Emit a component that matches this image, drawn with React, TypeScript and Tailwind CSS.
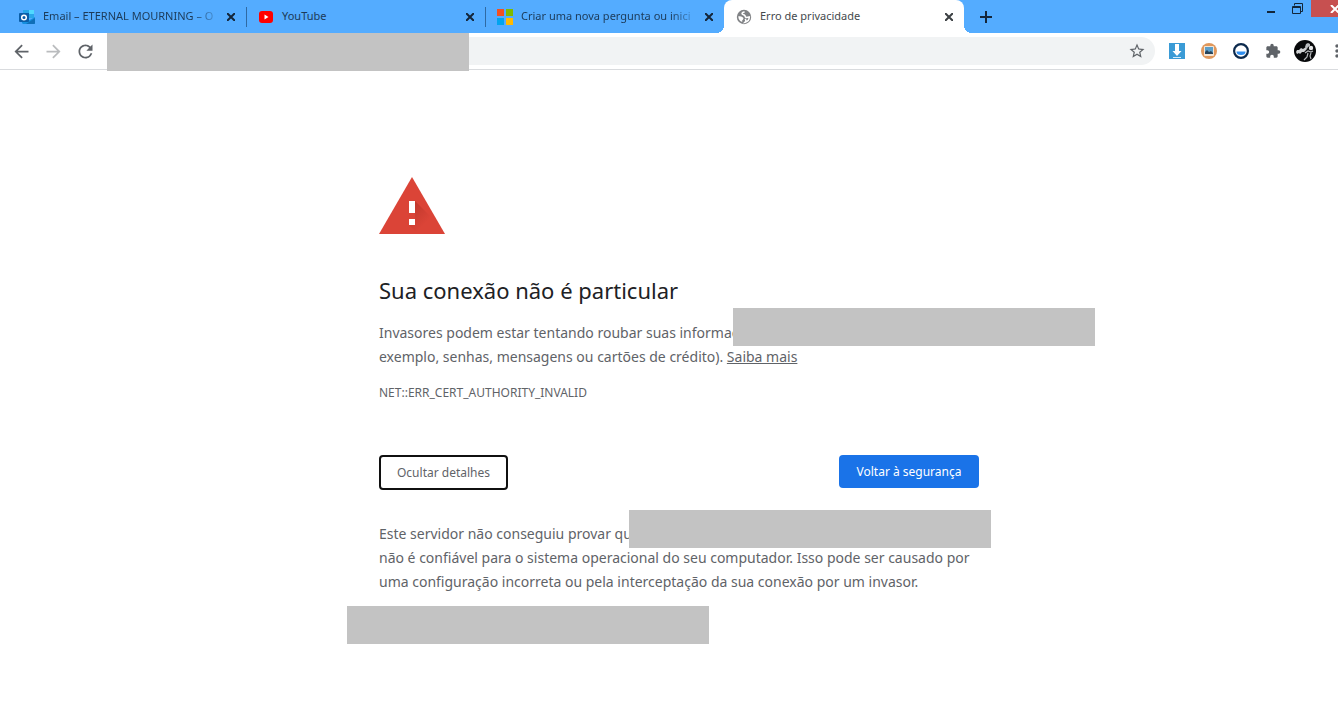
import { ReactNode } from 'react'
import {
  MdArrowBack,
  MdArrowForward,
  MdRefresh,
  MdStarOutline,
  MdExtension,
  MdMoreVert,
} from 'react-icons/md'

export default function App() {
  return (
    <div className="min-h-screen overflow-hidden bg-white font-['Noto_Sans','Open_Sans',sans-serif]">
      {/* the window runs a little past the right edge of the screen */}
      <div className="-mr-5">
        <TabStrip />
        <Toolbar />
        <PrivacyError />
      </div>
    </div>
  )
}

function TabStrip() {
  return (
    <header className="flex h-[33px] bg-[#54acff] pl-[7px]">
      <Tab title="Email – ETERNAL MOURNING – O" icon={<OutlookIcon />} first faded />
      <Tab title="YouTube" icon={<YoutubeIcon />} />
      <Tab title="Criar uma nova pergunta ou inici" icon={<MicrosoftIcon />} faded />
      <Tab title="Erro de privacidade" icon={<GlobeIcon />} active />
      <button aria-label="Nova guia" className="ml-2 grid w-7 place-content-center">
        <svg width="12" height="12" viewBox="0 0 12 12" stroke="#14263a" strokeWidth="2">
          <path d="M6 0v12M0 6h12" />
        </svg>
      </button>
      <div className="ml-auto flex h-[17px] shrink-0">
        <button aria-label="Minimizar" className="grid w-[26px] place-content-center">
          <svg width="10" height="11" viewBox="0 0 10 11">
            <path d="M1 8h8v2H1z" fill="#12263a" />
          </svg>
        </button>
        <button aria-label="Restaurar" className="grid w-[27px] place-content-center">
          <svg width="11" height="11" viewBox="0 0 11 11" fill="none" stroke="#12263a">
            <path d="M2.5 2.5v-2h8v8h-2" />
            <path d="M.5 3.5h8v7h-8zM.5 4.5h8" />
          </svg>
        </button>
        <button aria-label="Fechar" className="grid w-[47px] place-content-center bg-[#c75050]">
          <svg width="10" height="8" viewBox="0 0 10 8" stroke="#fff" strokeWidth="2">
            <path d="M1 0l8 8M9 0L1 8" />
          </svg>
        </button>
      </div>
    </header>
  )
}

type TabProps = { title: string; icon: ReactNode; active?: boolean; first?: boolean; faded?: boolean }

function Tab({ title, icon, active, first, faded }: TabProps) {
  const look = active
    ? 'w-60 rounded-t-lg bg-white text-[#45494d] before:absolute before:bottom-0 before:-left-2 before:size-2 before:bg-[radial-gradient(circle_at_0_0,transparent_8px,white_8px)] after:absolute after:bottom-0 after:-right-2 after:size-2 after:bg-[radial-gradient(circle_at_100%_0,transparent_8px,white_8px)]'
    : 'w-[239px] text-[#1c3a58]'
  const fade = faded ? ' [mask-image:linear-gradient(to_right,black_150px,transparent_178px)]' : ''

  return (
    <div className={'relative flex shrink-0 items-center pr-[7px] ' + look}>
      <span className={'h-5 w-px ' + (active || first ? '' : 'bg-[#2f6aa3]')}></span>
      <span className="ml-[11px] size-4 shrink-0">{icon}</span>
      <span className={'ml-2 flex-1 pb-px text-[11px] leading-5 whitespace-nowrap' + fade}>{title}</span>
      <button aria-label={'Fechar ' + title} className="grid size-4 place-content-center">
        <svg width="8" height="8" viewBox="0 0 8 8" stroke={active ? '#3c4043' : '#14263a'} strokeWidth="2">
          <path d="M0 0l8 8M8 0L0 8" />
        </svg>
      </button>
    </div>
  )
}

function Toolbar() {
  return (
    <nav className="flex h-[37px] items-center gap-1 border-b border-[#d9dbde] bg-white px-[7px] text-[#5f6368]">
      <ToolButton label="Voltar"><MdArrowBack size={21} /></ToolButton>
      <ToolButton label="Avançar"><MdArrowForward size={21} className="text-[#babcbe]" /></ToolButton>
      <ToolButton label="Recarregar"><MdRefresh size={21} /></ToolButton>

      <div className="relative mx-1 flex h-7 flex-1 items-center rounded-full bg-[#f1f3f4] pr-1">
        <input aria-label="Endereço" className="min-w-0 flex-1 bg-transparent pl-4 text-sm outline-none" />
        <button aria-label="Favoritos" className="grid size-7 place-content-center">
          <MdStarOutline size={18} />
        </button>
        <div className="absolute -top-1 left-0 h-[38px] w-[362px] bg-[#c3c3c3]"></div>
      </div>

      <ToolButton label="Downloads"><DownloadIcon /></ToolButton>
      <ToolButton label="Imagens"><PictureIcon /></ToolButton>
      <ToolButton label="Progresso"><RingIcon /></ToolButton>
      <ToolButton label="Extensões"><MdExtension size={16} /></ToolButton>
      <ToolButton label="Perfil"><Avatar /></ToolButton>
      <ToolButton label="Menu"><MdMoreVert size={20} /></ToolButton>
    </nav>
  )
}

function ToolButton({ label, children }: { label: string; children: ReactNode }) {
  return (
    <button aria-label={label} className="grid size-7 shrink-0 place-content-center">
      {children}
    </button>
  )
}

function PrivacyError() {
  return (
    <main className="mx-auto w-full max-w-[600px] pt-[107px] text-[14px] leading-6 text-[#5f6368]">
      <WarningIcon />
      <h1 className="mt-10 text-[22px] leading-8 text-[#202124]">Sua conexão não é particular</h1>

      <div className="relative mt-[15px]">
        <p>
          Invasores podem estar tentando roubar suas informaç
          <br />
          exemplo, senhas, mensagens ou cartões de crédito).{' '}
          <a href="#" className="underline">Saiba mais</a>
        </p>
        <div className="absolute -top-[13px] left-[354px] h-[38px] w-[362px] bg-[#c3c3c3]"></div>
      </div>
      <p className="mt-3 text-[12px]">NET::ERR_CERT_AUTHORITY_INVALID</p>

      <div className="mt-[50px] flex items-start justify-between text-[12px]">
        <button className="h-[35px] w-[129px] rounded-sm border-2 border-[#101010]">Ocultar detalhes</button>
        <button className="h-[33px] w-[140px] rounded-sm bg-[#1a73e8] text-white">Voltar à segurança</button>
      </div>

      <div className="relative mt-8">
        <p>
          Este servidor não conseguiu provar qu
          <br />
          não é confiável para o sistema operacional do seu computador. Isso pode ser causado por
          uma configuração incorreta ou pela interceptação da sua conexão por um invasor.
        </p>
        <div className="absolute -top-3 left-[250px] h-[38px] w-[362px] bg-[#c3c3c3]"></div>
      </div>
      <div className="mt-3 -ml-8 h-[38px] w-[362px] bg-[#c3c3c3]"></div>
    </main>
  )
}

function WarningIcon() {
  return (
    <svg width="66" height="57" viewBox="0 0 66 57">
      <defs>
        <linearGradient id="shade" x1="0" y1="0" x2="1" y2="1">
          <stop offset="0" stopColor="#a52b20" stopOpacity=".6" />
          <stop offset=".6" stopColor="#a52b20" stopOpacity="0" />
        </linearGradient>
      </defs>
      <path d="M33 0l33 57H0z" fill="#db4437" />
      <path d="M36 24l16 16 9 17H39l-9-9 6-6z" fill="url(#shade)" />
      <path d="M30 24h6v12h-6zM30 42h6v6h-6z" fill="#fff" />
    </svg>
  )
}

function OutlookIcon() {
  return (
    <svg width="16" height="16" viewBox="0 0 16 16">
      <path d="M4 1h11v8H4z" fill="#28a8ea" />
      <path d="M10 1h5v4h-5z" fill="#50d9ff" />
      <path d="M5 4h5v5H5z" fill="#0364b8" />
      <path d="M3 14V9l6 3 7-4v6a1 1 0 0 1-1 1H4z" fill="#1490df" />
      <path d="M7 15l9-6v5a1 1 0 0 1-1 1z" fill="#0f6fb8" />
      <rect y="4" width="10" height="9" rx="1" fill="#0a5ea8" />
      <circle cx="5" cy="8.5" r="2.3" fill="none" stroke="#fff" strokeWidth="1.5" />
    </svg>
  )
}

function YoutubeIcon() {
  return (
    <svg width="16" height="16" viewBox="0 0 16 16">
      <rect x="1" y="2" width="14" height="12" rx="3" fill="#f00" />
      <path d="M6.500 5.500v5l4-2.500z" fill="#fff" />
    </svg>
  )
}

function MicrosoftIcon() {
  return (
    <svg width="16" height="16" viewBox="0 0 16 16">
      <path d="M0 0h7v7H0z" fill="#f25022" />
      <path d="M9 0h7v7H9z" fill="#7fba00" />
      <path d="M0 9h7v7H0z" fill="#00a4ef" />
      <path d="M9 9h7v7H9z" fill="#ffb900" />
    </svg>
  )
}

function GlobeIcon() {
  return (
    <svg width="16" height="16" viewBox="0 0 16 16">
      <circle cx="8" cy="8" r="7.2" fill="#808285" />
      <path
        d="M8.6 3.200c-1.300-.3-2.600.5-2.500 1.600.1 1 1.500.9 2.500 1.500.9.600.3 1.600 1.300 2 1 .400 2.300 0 3.400-.3-.1 2.500-1.800 4.600-4.100 5.100 1.100-1.100.8-2.300-.2-3.100"
        fill="none"
        stroke="#fff"
        strokeWidth="1.600"
      />
      <path d="M2.300 7.200c2 .1 3.900.3 4.900 1.500.8 1-.2 1.800-.9 2.500-.3.500-.2 1.100 0 1.700C4 12.300 2.200 10.100 2.300 7.200z" fill="#fff" />
    </svg>
  )
}

function DownloadIcon() {
  return (
    <svg width="16" height="16" viewBox="0 0 16 16">
      <path d="M0 0h16v16H0z" fill="#3a9bd6" />
      <path d="M6 1h4v7h2.500L8 13 3.500 8H6z" fill="#fff" />
      <path d="M4 14h8v1H4z" fill="#d4ecfa" />
    </svg>
  )
}

function PictureIcon() {
  return (
    <svg width="16" height="16" viewBox="0 0 16 16">
      <circle cx="8" cy="8" r="8" fill="#e0985c" />
      <rect x="3" y="3" width="10" height="10" rx="1" fill="#f3e4d4" />
      <path d="M4 4h8v7H4z" fill="#5d9fc9" />
      <path d="M4 11V9l2-2 2 2 2-1 2 2v1z" fill="#27435a" />
    </svg>
  )
}

function RingIcon() {
  return (
    <svg width="16" height="16" viewBox="0 0 16 16">
      <circle cx="8" cy="8" r="6.900" fill="#fff" stroke="#0c2a4d" strokeWidth="2.200" />
      <path d="M3.500 8.500h9a4.500 3.500 0 0 1-9 0z" fill="#2f8ff0" />
    </svg>
  )
}

function Avatar() {
  return (
    <svg width="22" height="22" viewBox="0 0 22 22">
      <circle cx="11" cy="11" r="11" fill="#08090b" />
      <path d="M2 12l1-2 2 0 2-2 2 1 3-2 1 2-3 3-2 0-2 2-1-1-2 1z" fill="#d0d2d4" />
      <path d="M11 7l1-3 2-1 2 1 0 2-2 1-1 2z" fill="#b9bcbf" />
      <circle cx="17" cy="8" r="2.200" fill="#e6e7e8" />
      <path d="M11 13l3-2 3 1 2-1M14 13l-1 4-3 3M17 13l-1 3 1 3" fill="none" stroke="#b5b8bb" strokeWidth="1.200" />
    </svg>
  )
}
